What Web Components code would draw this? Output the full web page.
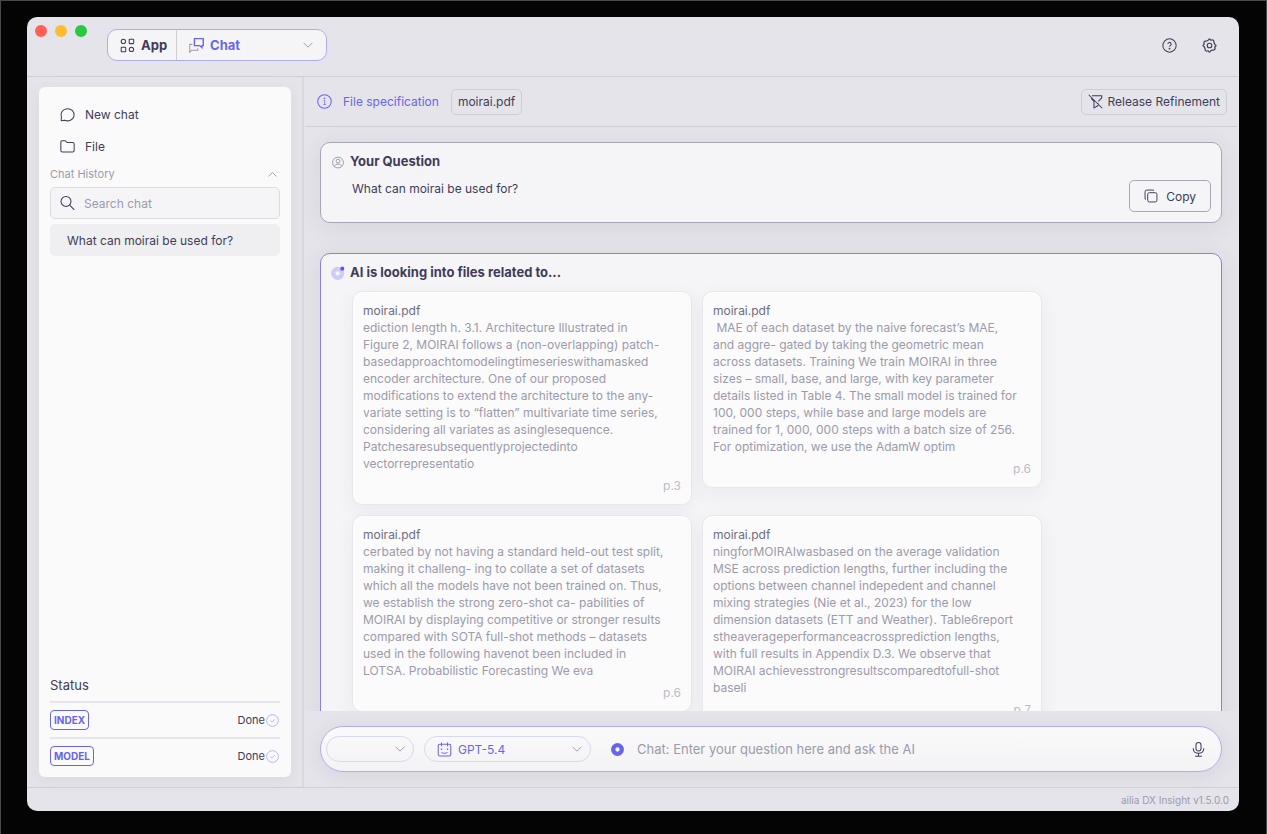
<!DOCTYPE html>
<html lang="en">
<head>
<meta charset="utf-8">
<title>ailia DX Insight</title>
<style>
    :root {
        --text: #3f3c58;
        --sub: #9c9aab;
        --accent: #6865e9;
        --accent-light: #aeacf0;
        --base: #e5e4ea;
        --surface: #f5f5f8;
        --panel: #fafafb;
        --line: #cfced6;
    }
    body {
        box-sizing: border-box;
        height: 100vh;
        margin: 0;
        padding: 16px 27px 23px 26px;
        border: 1px solid #4a4a4a;
        border-bottom: 0;
        background: #040404;
        color: var(--text);
        font: 12px/17px Inter, "Liberation Sans", sans-serif;
    }
</style>
</head>
<body>
<app-window></app-window>

<script>
/**
 * Icon shapes, drawn on a 16 x 16 grid
 */
const Icons = {
    apps: `<circle cx="3.6" cy="3.6" r="2.3"/><rect x="9.8" y="1.4" width="4.8" height="4.6" rx=".6"/><rect x="1.3" y="9.9" width="4.8" height="4.7" rx=".6"/><circle cx="12.2" cy="12.2" r="2.3"/>`,
    chats: `<path d="M5.8 .7h9.4v7.4h-1.4v2.2l-2.4-2.2H5.8z" stroke-width="1.5"/><path d="M3.6 6.8H.8v8.4l2.2-2.2h6.4v-2" stroke="#9c9aab"/>`,
    down: `<path d="M3 5.5l5 5 5-5"/>`,
    up: `<path d="M3 10.5l5-5 5 5"/>`,
    help: `<circle cx="8" cy="8" r="7.1"/><path d="M6.2 6.4a1.8 1.8 0 1 1 2.6 1.7c-.6.3-.8.6-.8 1.2"/><circle cx="8" cy="11.4" r=".4"/>`,
    gear: `<path d="M6.6 2.4Q8-.4 9.4 2.4Q12.4 1.4 12.6 3.4Q12.6 5 13.6 6.6Q16.4 8 13.6 9.4Q14.6 12.4 12.6 12.6Q11 12.6 9.4 13.6Q8 16.4 6.6 13.6Q3.6 14.6 3.4 12.6Q3.4 11 2.4 9.4Q-.4 8 2.4 6.6Q1.4 3.6 3.4 3.4Q5 3.4 6.6 2.4z" stroke-width="1.3" stroke-linejoin="round"/><circle cx="8" cy="8" r="2.5"/>`,
    bubble: `<path d="M1.3 14.6l.2-4.1A7 6.5 0 1 1 5 14.1z" stroke-linejoin="round"/>`,
    folder: `<path d="M.9 12.2V3.4Q.9 1.8 2.5 1.8h3.3l1.7 2h6q1.6 0 1.6 1.6v6.8q0 1.6-1.6 1.6h-11Q.9 13.8.9 12.2z"/>`,
    search: `<circle cx="6.4" cy="5.8" r="5.3"/><path d="M10.3 9.7l5 5"/>`,
    check: `<circle cx="8" cy="8" r="7.2"/><path d="M5.3 8.2l1.8 1.7 3.5-3.5"/>`,
    info: `<circle cx="8" cy="8" r="7.2"/><path d="M7 7h1.2v4.2M6.8 11.2h2.7" stroke-width=".8"/><circle cx="8" cy="4.6" r=".4"/>`,
    filterOff: `<path d="M4.2 1.8h10.4v2.4L10.8 8M3.4 4.6l3 3.3v7l4.2-2.4V9.6M.7.8l14.5 14.4"/>`,
    user: `<circle cx="8" cy="8.6" r="6.2"/><circle cx="8" cy="7" r="2.2"/><path d="M4 13.2c.4-2 1.8-2.8 4-2.8s3.6.8 4 2.8"/>`,
    copy: `<rect x="4.2" y="4.2" width="10.6" height="10.6" rx="2"/><path d="M2.2 11.6H1.2V3.2q0-2 2-2h7.6v1"/>`,
    progress: `<circle cx="7.6" cy="8.4" r="5" stroke="#cfcdf5" stroke-width="5"/><circle cx="12.9" cy="3" r="2.3" fill="#5c59e6" stroke="none"/>`,
    ring: `<circle cx="8" cy="8" r="4.6" stroke-width="4.6"/>`,
    robot: `<rect x="1.3" y="2.4" width="13.4" height="12.6" rx="1.6"/><path d="M4.8.4v4M11.2.4v4M4.8 11q3.2 2.2 6.4 0"/><path d="M4.8 7v1.4M11.2 7v1.4" stroke-width="1.4"/>`,
    mic: `<rect x="5.3" y=".6" width="5.4" height="9" rx="2.7"/><path d="M2.4 6.6v.8q.4 4.6 5.6 4.6t5.6-4.6v-.8M8 12v3.2M4.4 15.3h7.2"/>`
};

/**
 * Base of all elements: puts the template into the shadow root
 */
class BaseElement extends HTMLElement {
    constructor() {
        super();
        const shadowRoot = this.attachShadow({ mode: 'open' });
        const template = document.createElement('template');
        template.innerHTML = `
            <style>
                * { box-sizing: border-box; }
                :host { display: block; box-sizing: border-box; }
                button, input, select {
                    margin: 0;
                    padding: 0;
                    border: 0;
                    outline: 0;
                    background: none;
                    color: inherit;
                    font: inherit;
                    text-align: left;
                    appearance: none;
                }
                button, select { cursor: pointer; }
                input::placeholder { color: var(--sub); opacity: 1; }
            </style>
            ${this.template()}
        `;
        shadowRoot.appendChild(document.importNode(template.content, true));
    }

    template() { return '<slot></slot>'; }
}

/**
 * Line icon
 */
class UiIcon extends BaseElement {
    template() {
        return `
            <style>
                :host { flex: none; width: 15px; height: 15px; }
                svg { display: block; width: 100%; height: 100%; overflow: visible; }
            </style>
            <svg viewBox="0 0 16 16" fill="none" stroke="currentColor" stroke-width="1.1" aria-hidden="true">
                ${Icons[this.getAttribute('name')]}
            </svg>
        `;
    }
}

/**
 * Drop-down with an optional icon on the left
 */
class UiSelect extends BaseElement {
    template() {
        const icon = this.getAttribute('icon');
        return `
            <style>
                :host {
                    display: grid;
                    grid-template-columns: 1fr;
                    align-items: center;
                    color: var(--accent);
                }
                select, ui-icon { grid-area: 1 / 1; }
                select {
                    width: 100%;
                    height: 100%;
                    padding: 0 ${icon ? '33px' : '12px'};
                }
                ui-icon { margin-left: 12px; pointer-events: none; }
                ui-icon.arrow {
                    justify-self: end;
                    width: 14px;
                    height: 14px;
                    margin-right: var(--arrow-gap, 6px);
                    color: var(--sub);
                }
            </style>
            <select aria-label="${this.getAttribute('label')}">
                <option>${this.getAttribute('value')}</option>
            </select>
            ${icon ? `<ui-icon name="${icon}"></ui-icon>` : ''}
            <ui-icon class="arrow" name="down"></ui-icon>
        `;
    }
}

/**
 * Title bar: window buttons, mode switch, help and settings
 */
class WindowHeader extends BaseElement {
    template() {
        return `
            <style>
                :host {
                    display: flex;
                    height: 60px;
                    padding: 0 22px 0 8px;
                    border-bottom: 1px solid var(--line);
                }
                .lights { display: flex; gap: 8px; padding-top: 8px; }
                .lights i { width: 12px; height: 12px; border-radius: 50%; }
                .mode {
                    display: flex;
                    width: 220px;
                    height: 32px;
                    margin: 12px auto 0 20px;
                    border: 1px solid var(--accent-light);
                    border-radius: 10px;
                    background: var(--surface);
                    font-size: 13px;
                    font-weight: 700;
                }
                .mode button {
                    display: flex;
                    align-items: center;
                    gap: 6px;
                    padding: 0 9px 0 12px;
                    border-right: 1px solid var(--line);
                }
                .mode ui-select { --arrow-gap: 11px; flex: 1; }
                .tools { display: flex; align-items: center; gap: 25px; height: 56px; }
            </style>
            <div class="lights">
                <i style="background: #ff5f57"></i>
                <i style="background: #febc2e"></i>
                <i style="background: #28c840"></i>
            </div>
            <div class="mode">
                <button type="button"><ui-icon name="apps"></ui-icon>App</button>
                <ui-select icon="chats" label="Mode" value="Chat"></ui-select>
            </div>
            <div class="tools">
                <button type="button" aria-label="Help"><ui-icon name="help"></ui-icon></button>
                <button type="button" aria-label="Settings"><ui-icon name="gear"></ui-icon></button>
            </div>
        `;
    }
}

/**
 * One line of the status list
 */
class StatusRow extends BaseElement {
    template() {
        return `
            <style>
                :host {
                    display: flex;
                    align-items: center;
                    height: 36px;
                    border-top: 2px solid #e6e6ea;
                    font-size: 11px;
                }
                b {
                    height: 20px;
                    margin-right: auto;
                    padding: 0 3px;
                    border: 1px solid var(--accent);
                    border-radius: 4px;
                    color: var(--accent);
                    font-size: 10px;
                    line-height: 18px;
                }
                ui-icon { width: 13px; height: 13px; margin: 0 1px; color: var(--accent-light); }
            </style>
            <b><slot></slot></b>Done<ui-icon name="check"></ui-icon>
        `;
    }
}

/**
 * Side bar: menu, chat history and status
 */
class SidePanel extends BaseElement {
    template() {
        return `
            <style>
                :host {
                    display: flex;
                    flex-direction: column;
                    padding: 11px 11px 4px;
                    border-radius: 6px;
                    background: var(--panel);
                    box-shadow: 0 4px 16px rgba(60, 55, 90, .06);
                }
                button { display: flex; align-items: center; width: 100%; }
                .menu { gap: 10px; height: 32px; padding: 0 10px; }
                .history {
                    justify-content: space-between;
                    height: 25px;
                    padding: 0 1px 0 0;
                    color: var(--sub);
                    font-size: 11px;
                }
                .history ui-icon { width: 13px; height: 13px; }
                .search {
                    display: flex;
                    align-items: center;
                    gap: 9px;
                    height: 32px;
                    padding: 0 9px;
                    border: 1px solid #dcdbe1;
                    border-radius: 5px;
                    background: var(--surface);
                }
                .search input { flex: 1; min-width: 0; }
                .item {
                    height: 32px;
                    margin-top: 5px;
                    padding: 0 17px;
                    border-radius: 5px;
                    background: #efeff2;
                }
                .status { margin: auto 0 0; padding-bottom: 7px; font-size: 13px; font-weight: 400; }
            </style>
            <button class="menu" type="button"><ui-icon name="bubble"></ui-icon>New chat</button>
            <button class="menu" type="button"><ui-icon name="folder"></ui-icon>File</button>
            <button class="history" type="button">Chat History<ui-icon name="up"></ui-icon></button>
            <label class="search">
                <ui-icon name="search"></ui-icon>
                <input type="search" placeholder="Search chat" aria-label="Search chat">
            </label>
            <button class="item" type="button">What can moirai be used for?</button>
            <h2 class="status">Status</h2>
            <status-row>INDEX</status-row>
            <status-row>MODEL</status-row>
        `;
    }
}

/**
 * Bar over the chat with the selected file
 */
class FileBar extends BaseElement {
    template() {
        return `
            <style>
                :host {
                    display: flex;
                    align-items: center;
                    height: 50px;
                    padding: 0 10px 0 12px;
                    border-bottom: 1px solid var(--line);
                }
                .spec { display: flex; align-items: center; gap: 11px; color: var(--accent); }
                .file, .release {
                    height: 26px;
                    padding: 0 6px;
                    border: 1px solid var(--line);
                    border-radius: 5px;
                    line-height: 24px;
                }
                .file { margin: 0 auto 0 12px; }
                .release { display: flex; align-items: center; gap: 4px; }
            </style>
            <button class="spec" type="button"><ui-icon name="info"></ui-icon>File specification</button>
            <span class="file">moirai.pdf</span>
            <button class="release" type="button"><ui-icon name="filterOff"></ui-icon>Release Refinement</button>
        `;
    }
}

/**
 * Framed block of the conversation
 */
class ChatBlock extends BaseElement {
    template() {
        return `
            <style>
                :host {
                    flex: none;
                    padding: 10px;
                    border: 1px solid #a9a7b6;
                    border-radius: 10px;
                    background: var(--surface);
                    box-shadow: 0 4px 24px rgba(60, 55, 90, .09);
                }
                :host([active]) { border-color: #8482ea; }
                h2 {
                    display: flex;
                    align-items: center;
                    gap: 5px;
                    margin: 0 0 10px;
                    font-size: 13px;
                    font-weight: 700;
                }
                ui-icon { width: 14px; height: 14px; color: var(--sub); }
                .body { padding-left: 21px; }
            </style>
            <h2><ui-icon name="${this.getAttribute('icon')}"></ui-icon>${this.getAttribute('heading')}</h2>
            <div class="body"><slot></slot></div>
        `;
    }
}

/**
 * Passage of a file that the answer is based on.
 * Line breaks of the passage are kept.
 */
class SourceCard extends BaseElement {
    template() {
        return `
            <style>
                :host {
                    padding: 10px;
                    border: 1px solid #e8e7eb;
                    border-radius: 10px;
                    background: #fbfbfc;
                    box-shadow: 0 6px 20px rgba(60, 55, 90, .06);
                    color: var(--sub);
                }
                h3 { margin: 0; color: #6e6b81; font-size: 12px; font-weight: 400; }
                p { margin: 0; white-space: pre-wrap; overflow-wrap: anywhere; }
                footer { margin-top: 5px; color: #bdbcc6; text-align: right; }
            </style>
            <h3>${this.getAttribute('file')}</h3>
            <p><slot></slot></p>
            <footer>p.${this.getAttribute('page')}</footer>
        `;
    }
}

/**
 * Input bar under the chat
 */
class PromptBar extends BaseElement {
    template() {
        return `
            <style>
                :host {
                    display: flex;
                    align-items: center;
                    gap: 10px;
                    height: 46px;
                    margin: 15px 17px 15px 16px;
                    padding: 0 15px 0 5px;
                    border: 1px solid var(--accent-light);
                    border-radius: 23px;
                    background: linear-gradient(#fafafb, #f3f3f5);
                    box-shadow: 0 4px 20px rgba(60, 55, 90, .09);
                }
                ui-select {
                    flex: none;
                    width: 88px;
                    height: 26px;
                    border: 1px solid #d9d8f3;
                    border-radius: 13px;
                }
                ui-select[icon] { width: 167px; }
                label { display: flex; flex: 1; align-items: center; gap: 12px; padding-left: 9px; font-size: 13px; }
                label ui-icon { color: var(--accent); }
                input { flex: 1; min-width: 0; }
            </style>
            <ui-select label="Prompt" value=""></ui-select>
            <ui-select icon="robot" label="Model" value="GPT-5.4"></ui-select>
            <label>
                <ui-icon name="ring"></ui-icon>
                <input type="text" aria-label="Question" placeholder="Chat: Enter your question here and ask the AI">
            </label>
            <button type="button" aria-label="Voice input"><ui-icon name="mic"></ui-icon></button>
        `;
    }
}

/**
 * Conversation
 */
class ChatLog extends BaseElement {
    template() {
        return `
            <style>
                :host {
                    display: flex;
                    flex: 1;
                    flex-direction: column;
                    gap: 30px;
                    min-height: 0;
                    padding: 15px 17px 15px 16px;
                    overflow-y: auto;
                    scrollbar-width: none;
                }
                .question { display: flex; align-items: flex-start; justify-content: space-between; }
                .copy {
                    display: flex;
                    align-items: center;
                    gap: 8px;
                    height: 32px;
                    padding: 0 14px;
                    border: 1px solid #a9a7b6;
                    border-radius: 5px;
                }
                .copy ui-icon { width: 14px; height: 14px; }
                .sources {
                    display: grid;
                    grid-template-columns: repeat(2, minmax(0, 340px));
                    align-items: start;
                    gap: 10px;
                }
            </style>
            <chat-block icon="user" heading="Your Question">
                <div class="question">
                    What can moirai be used for?
                    <button class="copy" type="button"><ui-icon name="copy"></ui-icon>Copy</button>
                </div>
            </chat-block>
            <chat-block icon="progress" heading="AI is looking into files related to..." active>
                <div class="sources">
                    <source-card file="moirai.pdf" page="3">ediction length h. 3.1. Architecture Illustrated in
Figure 2, MOIRAI follows a (non-overlapping) patch-
basedapproachtomodelingtimeserieswithamasked
encoder architecture. One of our proposed
modifications to extend the architecture to the any-
variate setting is to “flatten” multivariate time series,
considering all variates as asinglesequence.
Patchesaresubsequentlyprojectedinto
vectorrepresentatio</source-card>
                    <source-card file="moirai.pdf" page="6"> MAE of each dataset by the naive forecast’s MAE,
and aggre- gated by taking the geometric mean
across datasets. Training We train MOIRAI in three
sizes – small, base, and large, with key parameter
details listed in Table 4. The small model is trained for
100, 000 steps, while base and large models are
trained for 1, 000, 000 steps with a batch size of 256.
For optimization, we use the AdamW optim</source-card>
                    <source-card file="moirai.pdf" page="6">cerbated by not having a standard held-out test split,
making it challeng- ing to collate a set of datasets
which all the models have not been trained on. Thus,
we establish the strong zero-shot ca- pabilities of
MOIRAI by displaying competitive or stronger results
compared with SOTA full-shot methods – datasets
used in the following havenot been included in
LOTSA. Probabilistic Forecasting We eva</source-card>
                    <source-card file="moirai.pdf" page="7">ningforMOIRAIwasbased on the average validation
MSE across prediction lengths, further including the
options between channel indepedent and channel
mixing strategies (Nie et al., 2023) for the low
dimension datasets (ETT and Weather). Table6report
stheaverageperformanceacrossprediction lengths,
with full results in Appendix D.3. We observe that
MOIRAI achievesstrongresultscomparedtofull-shot
baseli</source-card>
                </div>
            </chat-block>
        `;
    }
}

/**
 * Application window
 */
class AppWindow extends BaseElement {
    template() {
        return `
            <style>
                :host {
                    display: flex;
                    flex-direction: column;
                    height: 100%;
                    border-radius: 10px;
                    background: var(--base);
                    overflow: hidden;
                }
                .content { display: flex; flex: 1; min-height: 0; }
                aside {
                    display: flex;
                    flex: none;
                    width: 277px;
                    padding: 10px 11px 10px 12px;
                    border-right: 2px solid #d9d8df;
                }
                side-panel { flex: 1; min-width: 0; }
                main { display: flex; flex: 1; flex-direction: column; min-width: 0; }
                file-bar { margin: 0 2px 0 1px; }
                .version {
                    height: 24px;
                    padding-right: 10px;
                    border-top: 1px solid var(--line);
                    color: var(--sub);
                    font-size: 10px;
                    line-height: 24px;
                    text-align: right;
                }
            </style>
            <window-header></window-header>
            <div class="content">
                <aside><side-panel></side-panel></aside>
                <main>
                    <file-bar></file-bar>
                    <chat-log></chat-log>
                    <prompt-bar></prompt-bar>
                </main>
            </div>
            <footer class="version">ailia DX Insight v1.5.0.0</footer>
        `;
    }
}

customElements.define("ui-icon", UiIcon);
customElements.define("ui-select", UiSelect);
customElements.define("window-header", WindowHeader);
customElements.define("status-row", StatusRow);
customElements.define("side-panel", SidePanel);
customElements.define("file-bar", FileBar);
customElements.define("chat-block", ChatBlock);
customElements.define("source-card", SourceCard);
customElements.define("prompt-bar", PromptBar);
customElements.define("chat-log", ChatLog);
customElements.define("app-window", AppWindow);
</script>
</body>
</html>
